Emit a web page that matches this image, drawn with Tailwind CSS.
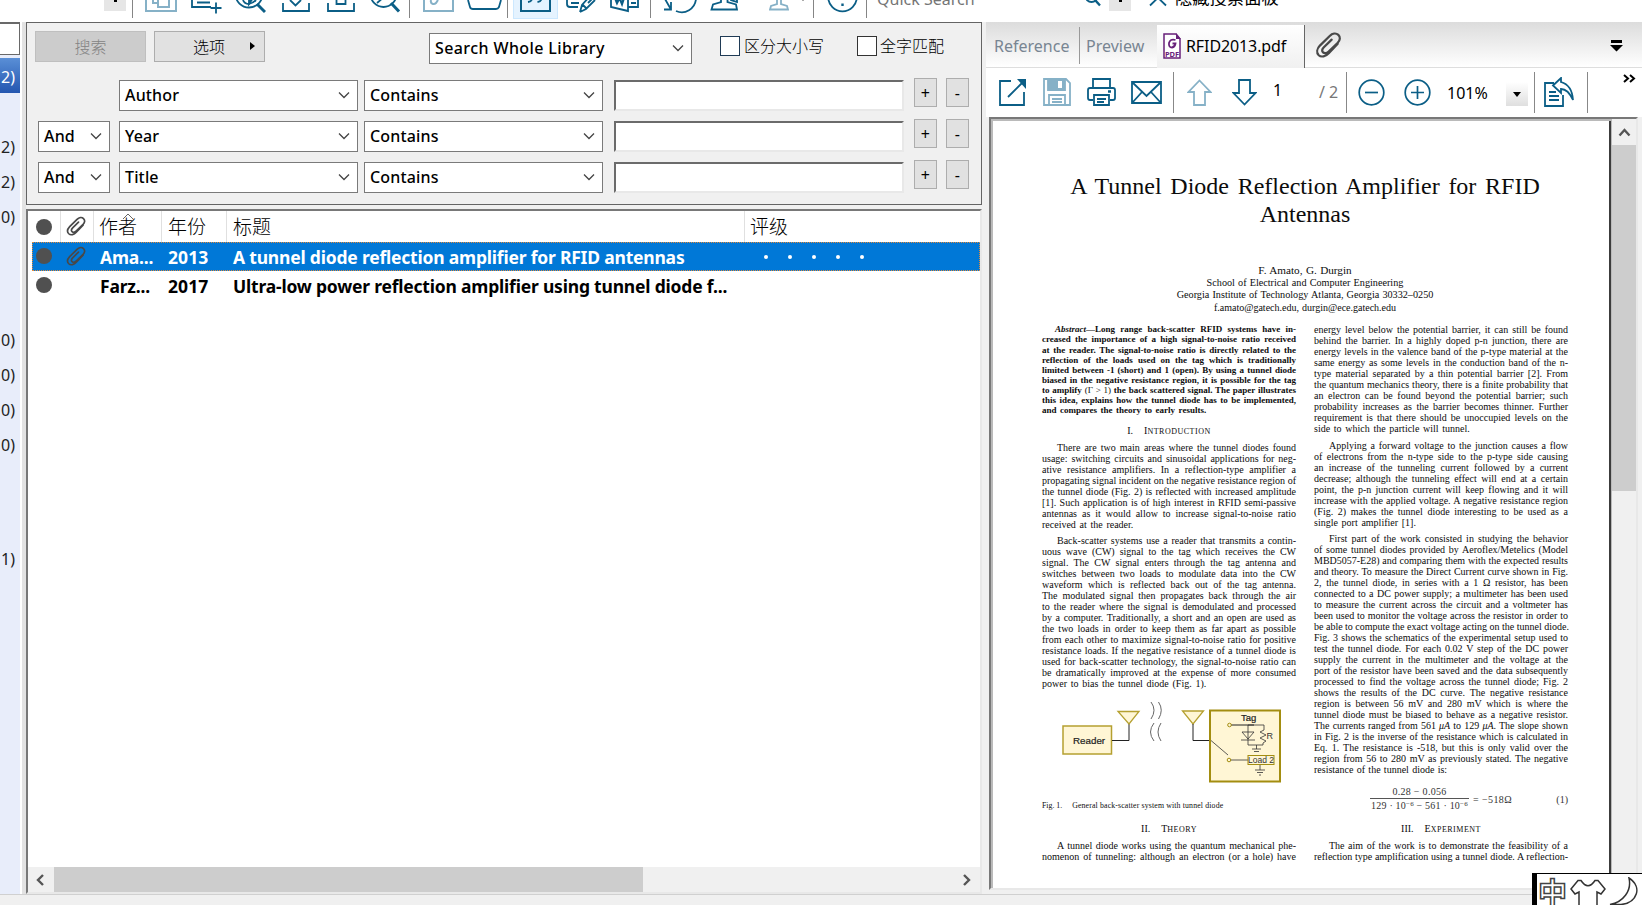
<!DOCTYPE html>
<html lang="zh-CN">
<head>
  <meta charset="UTF-8" />
  <meta name="viewport" content="width=device-width, initial-scale=1.0" />
  <title>Library</title>
  <script src="https://cdn.jsdelivr.net/npm/@tailwindcss/browser@4"></script>
</head>
<body class="w-[1642px] h-[905px] overflow-hidden bg-[#f0f0f0] text-black font-['Noto_Sans','Noto_Sans_CJK_SC',sans-serif]">

  <!-- Shared icons -->
  <svg class="hidden">
    <symbol id="chev" viewBox="0 0 12 8"><path d="M1 1.5L6 6.5L11 1.5" fill="none" stroke="#444" stroke-width="1.3" /></symbol>
    <symbol id="clip" viewBox="0 0 24 24"><path d="M19.5 10.5L11.8 18.6C9.2 21.4 5.4 22.4 3.2 20.3C1 18.1 1.7 14.8 4.2 12.1L12.6 3.8C14.8 1.6 18 1 20 2.9C22 4.8 21.6 7.4 19.5 9.6L11.5 17.3C10 18.8 8 19 6.9 17.9C5.8 16.8 6.2 15 7.6 13.5L14.3 7" fill="none" stroke="#484848" stroke-width="1.9" stroke-linecap="round" /></symbol>
  </svg>

  <div class="relative flex flex-col w-[1642px] h-[905px] overflow-hidden">

    <!-- Top toolbar -->
    <header class="flex items-start h-[22px] shrink-0 bg-white overflow-hidden">
      <div class="ml-[104px] w-[22px] h-[11px] bg-[#e6e6e6] flex justify-center"><span class="w-[3px] h-[2px] bg-black"></span></div>
      <div class="ml-[6px] w-px h-[18px] bg-[#858585]"></div>
      <svg class="ml-[12px]" width="32" height="14" fill="none" stroke="#86b1c7" stroke-width="2"><path d="M1 0V11H31V0" /><path d="M8 0V3H13M13 0V7H24V0" /></svg>
      <svg class="ml-[14px]" width="31" height="14" fill="none" stroke="#0b5e86" stroke-width="2"><path d="M1 0V7H20M6 2.5H19M19.5 8H30.5M25 2.5V13.5" stroke-width="1.8" /></svg>
      <svg class="ml-[13px]" width="31" height="14" fill="none" stroke="#0b5e86" stroke-width="1.8"><circle cx="14" cy="-6" r="13.5" /><path d="M8 0C9 3 12 4 14 4C18 3 20 1 21 0" /><path d="M14 -2L18 -2L14 4Z" fill="#0b5e86" /><path d="M22 4L30 12" stroke-width="3" /></svg>
      <svg class="ml-[16px]" width="28" height="14" fill="none" stroke="#0b5e86" stroke-width="1.8"><path d="M1 3V11H27V3M8 0L13.5 5.5L19 0" /></svg>
      <svg class="ml-[17px]" width="28" height="14" fill="none" stroke="#0b5e86" stroke-width="1.8"><path d="M1 3V11H27V3M9.500 0V4H18.500V0" /></svg>
      <svg class="ml-[15px]" width="31" height="14" fill="none" stroke="#0b5e86" stroke-width="1.8"><circle cx="13.500" cy="-6" r="13" /><path d="M7 3L14 -3" /><path d="M21 3L29 11.500" stroke-width="3" /></svg>
      <div class="ml-[8px] w-px h-[18px] bg-[#858585]"></div>
      <svg class="ml-[13px]" width="31" height="14" fill="none" stroke="#86b1c7" stroke-width="2"><path d="M1 0V11H30V0" /><path d="M8 0C7 4 11 5 13 3L15 0" /></svg>
      <svg class="ml-[13px]" width="36" height="14" fill="none" stroke="#0b5e86" stroke-width="1.8"><path d="M1 0L3 7Q3.500 9 6 9H29Q31 9 32 7L34 0" /></svg>
      <div class="ml-[4px] w-px h-[18px] bg-[#858585]"></div>
      <div class="ml-[5px] w-[45px] h-[19px] bg-[#e5f3ff] border border-t-0 border-[#cce8ff] flex justify-center">
        <svg width="31" height="14" fill="none" stroke="#0b5e86" stroke-width="2"><path d="M1 0V11H30V0" /><path d="M12 -1Q11.500 1.500 8 2M21.500 -1Q21 1.500 17.500 2" stroke-width="1.800" /></svg>
      </div>
      <svg class="ml-[8px]" width="31" height="14" fill="none" stroke="#0b5e86" stroke-width="1.800"><path d="M1 0V4Q1 7 4 7H12M5 3H13" /><path d="M14 12L16 5L24 -4M14 12L20 9L29 0M17 5L20 8M22 3L26 -1" /></svg>
      <svg class="ml-[13px]" width="31" height="14" fill="none" stroke="#0b5e86" stroke-width="1.800"><path d="M1 0V7L18 11V0" /><path d="M5 -2L7 3L9.500 -2L12 4L14 -2" stroke-width="2.200" /><path d="M18 7H28V0M21 3H26" /></svg>
      <div class="ml-[9px] w-px h-[18px] bg-[#858585]"></div>
      <svg class="ml-[12px]" width="34" height="14" fill="none" stroke="#0b5e86" stroke-width="1.800"><path d="M1 9.500H8V2M8 9.500L2 -1M13 11C22 15 32 9 33 -1" /></svg>
      <svg class="ml-[13px]" width="29" height="14" fill="none" stroke="#0b5e86" stroke-width="1.800"><path d="M11 -1V2L3 4.500L1.500 9.500H27L26 4.500L17.500 2V-1M21 -1V0L27 2V-1" /></svg>
      <svg class="ml-[30px]" width="20" height="14" fill="none" stroke="#86b1c7" stroke-width="1.800"><path d="M8 -1V4L2 6L1 9.500H19L18 6L12 4V-1" /></svg>
      <span class="ml-[13px] w-[2px] h-px bg-[#aaa]"></span>
      <div class="ml-[9px] w-px h-[18px] bg-[#858585]"></div>
      <svg class="ml-[13px]" width="31" height="14" fill="none" stroke="#0b5e86" stroke-width="1.800"><circle cx="15.500" cy="-3" r="14.300" /><path d="M15.500 3.500V6" stroke-width="2.400" /></svg>
      <div class="ml-[8px] w-px h-[18px] bg-[#858585]"></div>
      <span class="ml-[10px] -mt-[12px] w-[198px] h-[22px] leading-[22px] text-[16px] text-[#757575] whitespace-nowrap">Quick Search</span>
      <svg class="ml-[10px]" width="18" height="14" fill="none" stroke="#0b5e86" stroke-width="1.800"><circle cx="6.500" cy="-4" r="6" /><path d="M10 0L15 5.500" stroke-width="2.400" /></svg>
      <div class="ml-[6px] w-[22px] h-[11px] bg-[#e6e6e6] flex justify-center"><span class="w-[3px] h-[2px] bg-black"></span></div>
      <svg class="ml-[18px]" width="19" height="14" fill="none" stroke="#0b5e86" stroke-width="1.800"><path d="M1 5.500L16 -9M2 -9L17 5.500" /></svg>
      <span class="ml-[7px] -mt-[14px] h-[24px] leading-[24px] text-[17.300px] whitespace-nowrap">隐藏搜索面板</span>
    </header>

    <main class="flex h-[872px] shrink-0">

      <!-- Groups column -->
      <aside class="w-[20px] shrink-0 bg-[#e8edfa] text-[16px] text-[#222] text-right overflow-hidden">
        <div class="h-[33px] border border-l-0 border-t-2 border-[#696969] bg-white"></div>
        <div class="mt-[3px] h-[35px] leading-[38px] pr-[5px] bg-linear-to-b from-[#5a8fd6] to-[#2456b0] text-white">2)</div>
        <div class="mt-[37px] h-[35px] leading-[35px] pr-[5px]">2)</div>
        <div class="h-[35px] leading-[35px] pr-[5px]">2)</div>
        <div class="h-[35px] leading-[35px] pr-[5px]">0)</div>
        <div class="mt-[88px] h-[35px] leading-[35px] pr-[5px]">0)</div>
        <div class="h-[35px] leading-[35px] pr-[5px]">0)</div>
        <div class="h-[35px] leading-[35px] pr-[5px]">0)</div>
        <div class="h-[35px] leading-[35px] pr-[5px]">0)</div>
        <div class="mt-[79px] h-[35px] leading-[35px] pr-[5px]">1)</div>
      </aside>
      <div class="w-[6px] shrink-0 bg-[#e3e3e3] border-l-2 border-white"></div>

      <!-- Search panel and list -->
      <section class="w-[956px] shrink-0 flex flex-col">
        <div class="h-[183px] border border-[#646464] bg-[#f0f0f0] pl-[8px] text-[16px]">
          <div class="flex items-start h-[57px] pt-[8px]">
            <div class="w-[111px] h-[31px] bg-[#cccccc] border border-[#bfbfbf] text-[#838383] text-center leading-[30px] font-light">搜索</div>
            <div class="ml-[8px] w-[111px] h-[31px] bg-[#e1e1e1] border border-[#adadad] flex items-center pl-[38px] leading-[30px] font-light">选项
              <svg class="ml-[25px] -mt-[2px]" width="6" height="10"><path d="M0 1L5 5L0 9Z" fill="#000" /></svg>
            </div>
            <div class="ml-[164px] mt-[2px] w-[263px] h-[31px] bg-white border border-[#7a7a7a] flex items-center justify-between pb-[2px] pl-[5px] pr-[7px] font-medium tracking-[0.400px]">Search Whole Library<svg width="12" height="8"><use href="#chev" /></svg></div>
            <div class="ml-[28px] mt-[5px] w-[20px] h-[20px] bg-white border border-[#1f3a55]"></div>
            <span class="ml-[4px] mt-[2px] w-[113px] leading-[26px] whitespace-nowrap font-light">区分大小写</span>
            <div class="mt-[5px] w-[20px] h-[20px] bg-white border border-[#333]"></div>
            <span class="ml-[3px] mt-[2px] leading-[26px] whitespace-nowrap font-light">全字匹配</span>
          </div>

          <div class="flex items-start h-[41px] font-medium tracking-[0.150px]">
            <div class="ml-[84px] w-[239px] h-[31px] bg-white border border-[#7a7a7a] flex items-center justify-between pb-[2px] pl-[5px] pr-[7px]">Author<svg width="12" height="8"><use href="#chev" /></svg></div>
            <div class="ml-[6px] w-[239px] h-[31px] bg-white border border-[#7a7a7a] flex items-center justify-between pb-[2px] pl-[5px] pr-[7px]">Contains<svg width="12" height="8"><use href="#chev" /></svg></div>
            <div class="ml-[11px] w-[290px] h-[31px] bg-white border-2 border-t-[#6b6b6b] border-l-[#6b6b6b] border-r-[#e8e8e8] border-b-[#e8e8e8]"></div>
            <div class="ml-[10px] -mt-[2px] w-[23px] h-[29px] bg-[#e1e1e1] border border-[#adadad] text-center leading-[29px] font-normal">+</div>
            <div class="ml-[9px] -mt-[2px] w-[23px] h-[29px] bg-[#e1e1e1] border border-[#adadad] text-center leading-[29px] font-normal">-</div>
          </div>

          <div class="flex items-start h-[41px] font-medium tracking-[0.150px]">
            <div class="ml-[3px] w-[72px] h-[31px] bg-white border border-[#7a7a7a] flex items-center justify-between pb-[2px] pl-[5px] pr-[7px]">And<svg width="12" height="8"><use href="#chev" /></svg></div>
            <div class="ml-[9px] w-[239px] h-[31px] bg-white border border-[#7a7a7a] flex items-center justify-between pb-[2px] pl-[5px] pr-[7px]">Year<svg width="12" height="8"><use href="#chev" /></svg></div>
            <div class="ml-[6px] w-[239px] h-[31px] bg-white border border-[#7a7a7a] flex items-center justify-between pb-[2px] pl-[5px] pr-[7px]">Contains<svg width="12" height="8"><use href="#chev" /></svg></div>
            <div class="ml-[11px] w-[290px] h-[31px] bg-white border-2 border-t-[#6b6b6b] border-l-[#6b6b6b] border-r-[#e8e8e8] border-b-[#e8e8e8]"></div>
            <div class="ml-[10px] -mt-[2px] w-[23px] h-[29px] bg-[#e1e1e1] border border-[#adadad] text-center leading-[29px] font-normal">+</div>
            <div class="ml-[9px] -mt-[2px] w-[23px] h-[29px] bg-[#e1e1e1] border border-[#adadad] text-center leading-[29px] font-normal">-</div>
          </div>

          <div class="flex items-start h-[41px] font-medium tracking-[0.150px]">
            <div class="ml-[3px] w-[72px] h-[31px] bg-white border border-[#7a7a7a] flex items-center justify-between pb-[2px] pl-[5px] pr-[7px]">And<svg width="12" height="8"><use href="#chev" /></svg></div>
            <div class="ml-[9px] w-[239px] h-[31px] bg-white border border-[#7a7a7a] flex items-center justify-between pb-[2px] pl-[5px] pr-[7px]">Title<svg width="12" height="8"><use href="#chev" /></svg></div>
            <div class="ml-[6px] w-[239px] h-[31px] bg-white border border-[#7a7a7a] flex items-center justify-between pb-[2px] pl-[5px] pr-[7px]">Contains<svg width="12" height="8"><use href="#chev" /></svg></div>
            <div class="ml-[11px] w-[290px] h-[31px] bg-white border-2 border-t-[#6b6b6b] border-l-[#6b6b6b] border-r-[#e8e8e8] border-b-[#e8e8e8]"></div>
            <div class="ml-[10px] -mt-[2px] w-[23px] h-[29px] bg-[#e1e1e1] border border-[#adadad] text-center leading-[29px] font-normal">+</div>
            <div class="ml-[9px] -mt-[2px] w-[23px] h-[29px] bg-[#e1e1e1] border border-[#adadad] text-center leading-[29px] font-normal">-</div>
          </div>
        </div>

        <!-- Reference list -->
        <div class="mt-[4px] w-[956px] h-[685px] border-2 border-t-[#787878] border-l-[#787878] border-r-[#e8e8e8] border-b-[#e8e8e8] bg-white flex flex-col">
          <div class="relative flex h-[31px] shrink-0 text-[19px] leading-[32px] font-light">
            <div class="w-[33px] border-r border-[#e0e0e0] flex items-center pl-[8px]"><span class="w-[16px] h-[16px] rounded-full bg-[#505050]"></span></div>
            <div class="w-[33px] border-r border-[#e0e0e0] flex items-center pl-[5px]"><svg width="21" height="21"><use href="#clip" /></svg></div>
            <div class="w-[68px] border-r border-[#e0e0e0] pl-[5px]">作者</div>
            <div class="w-[65px] border-r border-[#e0e0e0] pl-[6px]">年份</div>
            <div class="w-[518px] border-r border-[#e0e0e0] pl-[6px]">标题</div>
            <div class="pl-[5px]">评级</div>
            <svg class="absolute left-[94px] top-[2px]" width="12" height="7"><path d="M1 6L6 1L11 6" fill="none" stroke="#666" /></svg>
          </div>
          <div class="ml-[4px] flex h-[29px] shrink-0 bg-[#0078d7] text-white font-bold text-[17.500px] tracking-[-0.200px] leading-[28px] border border-dotted border-[#e08a3c]">
            <div class="w-[28px] pl-[3px] pt-[5px]"><span class="block w-[16px] h-[16px] rounded-full bg-[#505050]"></span></div>
            <div class="w-[33px] pl-[5px] pt-[3px]"><svg width="21" height="21"><use href="#clip" /></svg></div>
            <div class="w-[68px] pl-[6px]">Ama...</div>
            <div class="w-[65px] pl-[6px] tracking-[0.100px]">2013</div>
            <div class="w-[518px] pl-[6px] whitespace-nowrap">A tunnel diode reflection amplifier for RFID antennas</div>
            <div class="flex gap-[20px] pl-[19px] pt-[12px]">
              <span class="w-[4px] h-[4px] rounded-full bg-white"></span>
              <span class="w-[4px] h-[4px] rounded-full bg-white"></span>
              <span class="w-[4px] h-[4px] rounded-full bg-white"></span>
              <span class="w-[4px] h-[4px] rounded-full bg-white"></span>
              <span class="w-[4px] h-[4px] rounded-full bg-white"></span>
            </div>
          </div>
          <div class="ml-[5px] flex h-[29px] shrink-0 font-bold text-[17.500px] tracking-[-0.200px] leading-[31px]">
            <div class="w-[28px] pl-[3px] pt-[6px]"><span class="block w-[16px] h-[16px] rounded-full bg-[#505050]"></span></div>
            <div class="w-[33px]"></div>
            <div class="w-[68px] pl-[6px]">Farz...</div>
            <div class="w-[65px] pl-[6px] tracking-[0.100px]">2017</div>
            <div class="w-[518px] pl-[6px] whitespace-nowrap">Ultra-low power reflection amplifier using tunnel diode f...</div>
          </div>
          <div class="flex-1"></div>
          <div class="flex items-center h-[25px] bg-[#f0f0f0]">
            <svg class="ml-[8px]" width="9" height="12"><path d="M7 1L2 6L7 11" fill="none" stroke="#555" stroke-width="2.400" /></svg>
            <div class="ml-[9px] w-[589px] h-full bg-[#cdcdcd]"></div>
            <svg class="ml-auto mr-[9px]" width="9" height="12"><path d="M2 1L7 6L2 11" fill="none" stroke="#555" stroke-width="2.400" /></svg>
          </div>
        </div>
      </section>

      <!-- PDF panel -->
      <section class="ml-[4px] w-[656px] shrink-0 flex flex-col">
        <nav class="flex h-[46px] shrink-0 bg-linear-to-b from-[#dcdcdc] to-white text-[16px] border-b border-[#dedede]">
          <span class="w-[93px] pl-[8px] leading-[49px] text-[#788592]">Reference</span>
          <div class="mt-[5px] w-px h-[37px] bg-[#999]"></div>
          <span class="w-[77px] pl-[6px] leading-[49px] text-[#788592]">Preview</span>
          <div class="mt-[3px] w-[148px] h-[43px] bg-linear-to-b from-white to-[#f0f0f0] border-r border-[#666] flex items-center pl-[6px]">
            <svg width="18" height="26" class="-mt-[2px]"><path d="M1 1H13L17 6V25H1Z" fill="#fff" stroke="#68217a" stroke-width="1.500" /><path d="M13 0V6H18Z" fill="#68217a" /><path d="M12.500 7Q7 5.500 6 10Q5.500 14.500 9 14.500Q12 14 12.500 10.500H9.500" fill="none" stroke="#68217a" stroke-width="1.800" /><text x="2" y="23.500" font-size="7.500" font-weight="bold" fill="#68217a" textLength="14">PDF</text></svg>
            <span class="ml-[5px] -mt-[2px] tracking-[-0.100px]">RFID2013.pdf</span>
          </div>
          <svg class="ml-[10px] mt-[9px]" width="28" height="29"><use href="#clip" /></svg>
          <svg class="ml-auto mr-[19px] mt-[18px]" width="13" height="12"><path d="M1 0H12V3H1ZM0 5H13L6.500 11.500Z" fill="#000" /></svg>
        </nav>

        <div class="flex items-start h-[49px] shrink-0 bg-white text-[16px]">
          <svg class="ml-[12px] mt-[10px]" width="30" height="30" fill="none" stroke="#0b5e86" stroke-width="1.800"><path d="M13 3H2V27H26V14M10 19L24 5" /><path d="M19 1H28V11Z" fill="#0b5e86" stroke="none" /></svg>
          <svg class="ml-[15px] mt-[10px]" width="28" height="30" fill="none" stroke="#86b1c7" stroke-width="1.800"><path d="M1 1H23L27 5V27H1Z" /><path d="M5 1H22V12H5Z" fill="#86b1c7" /><path d="M15 3H19V10H15Z" fill="#fff" stroke="none" /><path d="M6 27V17H22V27M9 21H19M9 24H19" /></svg>
          <svg class="ml-[16px] mt-[10px]" width="29" height="30" fill="none" stroke="#0b5e86" stroke-width="1.800"><path d="M6 10V1H23V10M6 22H3Q1 22 1 20V12Q1 10 3 10H26Q28 10 28 12V20Q28 22 26 22H23M7 17H22V27H7ZM10 21H19M10 24H17" /><path d="M21 13.500H24" stroke-width="2.500" /></svg>
          <svg class="ml-[15px] mt-[13px]" width="31" height="24" fill="none" stroke="#0b5e86" stroke-width="1.800"><path d="M1 1H30V22H1ZM1 1L15.500 15L30 1M1 22L11 11M30 22L20 11" /></svg>
          <div class="ml-[11px] mt-[4px] w-px h-[41px] bg-[#888]"></div>
          <svg class="ml-[13px] mt-[11px]" width="25" height="28" fill="none" stroke="#86b1c7" stroke-width="1.800"><path d="M12.500 1.500L23.500 13H18V26H7V13H1.500Z" /></svg>
          <svg class="ml-[20px] mt-[11px]" width="25" height="28" fill="none" stroke="#0b5e86" stroke-width="1.800"><path d="M12.500 25.500L1.500 14H7V1H18V14H23.500Z" /></svg>
          <span class="ml-[16px] mt-[10px] w-[46px] leading-[24px]">1</span>
          <span class="mt-[12px] w-[27px] leading-[24px] text-[#777] whitespace-nowrap">/ 2</span>
          <div class="mt-[4px] w-px h-[41px] bg-[#888]"></div>
          <svg class="ml-[11px] mt-[11px]" width="27" height="27" fill="none" stroke="#0b5e86" stroke-width="1.700"><circle cx="13.500" cy="13.500" r="12.300" /><path d="M7 13.500H20" /></svg>
          <svg class="ml-[19px] mt-[11px]" width="27" height="27" fill="none" stroke="#0b5e86" stroke-width="1.700"><circle cx="13.500" cy="13.500" r="12.300" /><path d="M7 13.500H20M13.500 7V20" /></svg>
          <span class="ml-[16px] mt-[13px] w-[59px] leading-[24px]">101%</span>
          <div class="mt-[14px] w-[22px] h-[24px] bg-linear-to-b from-white to-[#dfdfdf] flex items-center justify-center"><svg width="8" height="5"><path d="M0 0H8L4 5Z" /></svg></div>
          <div class="ml-[6px] mt-[4px] w-px h-[41px] bg-[#888]"></div>
          <svg class="ml-[8px] mt-[9px]" width="32" height="31" fill="none" stroke="#0b5e86" stroke-width="1.800"><path d="M11 6H2V29H20V18M6 15H13M6 19H16M6 23H16" /><path d="M10 8.500L18 1V5Q29 8 30 23Q25 12 18 12V16Z" /></svg>
          <div class="ml-[12px] mt-[4px] w-px h-[41px] bg-[#888]"></div>
          <svg class="ml-[35px] mt-[6px]" width="13" height="9" fill="none" stroke="#000" stroke-width="2"><path d="M1 1L5 4.500L1 8M7 1L11 4.500L7 8" /></svg>
        </div>

        <div class="flex h-[773px] ml-[3px] mr-[4px] border-2 border-t-[#787878] border-l-[#787878] border-r-[#e8e8e8] border-b-[#e8e8e8] bg-[#bababa]">
          <!-- Page -->
          <article class="ml-[2px] mt-[2px] w-[618px] shrink-0 bg-white border-r-2 border-[#3c3c3c] overflow-hidden font-['Liberation_Serif',serif] text-[#0c0c0c]">
            <h1 class="mt-[51px] mr-[-8px] text-center text-[24px] leading-[28px] [word-spacing:2.700px]">A Tunnel Diode Reflection Amplifier for RFID<br />Antennas</h1>
            <div class="mt-[36px] mr-[-8px] text-center text-[10.200px] leading-[12.600px] [word-spacing:0.600px]">
              <div class="text-[11.200px]">F. Amato, G. Durgin</div>
              <div>School of Electrical and Computer Engineering</div>
              <div>Georgia Institute of Technology Atlanta, Georgia 30332–0250</div>
              <div class="text-[10px]">f.amato@gatech.edu, durgin@ece.gatech.edu</div>
            </div>

            <div class="mt-[10px] flex gap-[18px] pl-[49px] text-[10px] leading-[11px]">
              <div class="w-[254px] shrink-0">
                <p class="whitespace-nowrap indent-[13px] font-bold text-[9px] leading-[10.080px] [text-align-last:justify]">
                  <i>Abstract</i>—Long range back-scatter RFID systems have in-<br />
                  creased the importance of a high signal-to-noise ratio received<br />
                  at the reader. The signal-to-noise ratio is directly related to the<br />
                  reflection of the loads used on the tag which is traditionally<br />
                  limited between -1 (short) and 1 (open). By using a tunnel diode<br />
                  biased in the negative resistance region, it is possible for the tag<br />
                  to amplify <span class="font-normal">(Γ &gt; 1)</span> the back scattered signal. The paper illustrates<br />
                  this idea, explains how the tunnel diode has to be implemented,
                  <span class="block indent-0 [text-align-last:left] [word-spacing:1.300px]">and compares the theory to early results.</span>
                </p>
                <h2 class="mt-[10px] text-center">I.<span class="ml-[11px]">I<span class="text-[8px] tracking-[0.500px]">NTRODUCTION</span></span></h2>
                <p class="mt-[5px] whitespace-nowrap indent-[15px] [text-align-last:justify]">
                  There are two main areas where the tunnel diodes found<br />
                  usage: switching circuits and sinusoidal applications for neg-<br />
                  ative resistance amplifiers. In a reflection-type amplifier a<br />
                  propagating signal incident on the negative resistance region of<br />
                  the tunnel diode (Fig. 2) is reflected with increased amplitude<br />
                  [1]. Such application is of high interest in RFID semi-passive<br />
                  antennas as it would allow to increase signal-to-noise ratio
                  <span class="block indent-0 [text-align-last:left] [word-spacing:1.200px]">received at the reader.</span>
                </p>
                <p class="mt-[5px] whitespace-nowrap indent-[15px] [text-align-last:justify]">
                  Back-scatter systems use a reader that transmits a contin-<br />
                  uous wave (CW) signal to the tag which receives the CW<br />
                  signal. The CW signal enters through the tag antenna and<br />
                  switches between two loads to modulate data into the CW<br />
                  waveform which is reflected back out of the tag antenna.<br />
                  The modulated signal then propagates back through the air<br />
                  to the reader where the signal is demodulated and processed<br />
                  by a computer. Traditionally, a short and an open are used as<br />
                  the two loads in order to keep them as far apart as possible<br />
                  from each other to maximize signal-to-noise ratio for positive<br />
                  resistance loads. If the negative resistance of a tunnel diode is<br />
                  used for back-scatter technology, the signal-to-noise ratio can<br />
                  be dramatically improved at the expense of more consumed
                  <span class="block indent-0 [text-align-last:left] [word-spacing:1.200px]">power to bias the tunnel diode (Fig. 1).</span>
                </p>

                <!-- Fig. 1 -->
                <svg class="mt-[11px]" width="254" height="86" font-family="Liberation Sans, sans-serif" fill="none" stroke="#333">
                  <rect x="21" y="26" width="48.500" height="28" fill="#fff6d5" stroke="#b5a030" stroke-width="1.500" />
                  <text x="31" y="43.500" font-size="9.800" fill="#222" stroke="#222" stroke-width="0.200">Reader</text>
                  <path d="M70 40.500H87V24" stroke="#222" />
                  <path d="M76 11.500H97L87 24Z" fill="#fff6d5" stroke="#b5a030" stroke-width="1.300" />
                  <path d="M109 2Q115 10 109 19M116.500 2Q122 10 116.500 19M112 23Q105 32 112 41M119 23Q113 32 119 41" stroke="#666" />
                  <path d="M140.500 11H161.500L151 24Z" fill="#fff6d5" stroke="#b5a030" stroke-width="1.300" />
                  <path d="M151 24V40.500H169" stroke="#222" />
                  <rect x="168" y="10.500" width="70" height="71" fill="#fff6d5" stroke="#a38d10" stroke-width="2" />
                  <text x="199" y="21" font-size="9.500" fill="#222" stroke="#222" stroke-width="0.200">Tag</text>
                  <path d="M169 40.500L186 55M206 25H222V30L218 32L224 35L218 38L224 41L221 43V45H206V25M200 32H212L206 39ZM199 40H213M214.500 45V49M210 49H219M212 51.500H217M188 60H206M218 65V70M213 70H223M215 72.500H221M217 75H219" stroke-width="0.800" />
                  <path d="M189 25H212" stroke="#222" />
                  <circle cx="187.500" cy="25" r="1.800" stroke="#a38d10" />
                  <circle cx="187" cy="60" r="1.800" stroke="#a38d10" />
                  <text x="224.500" y="38.500" font-size="9" fill="#333" stroke="none">R</text>
                  <rect x="206" y="55.500" width="26" height="9" stroke="#a38d10" />
                  <text x="206" y="63" font-size="8.500" fill="#333" stroke="none" textLength="26">Load 2</text>
                </svg>
                <div class="mt-[15px] text-[7.800px] leading-[10px] whitespace-nowrap">Fig. 1.<span class="ml-[10px] tracking-[0.150px]">General back-scatter system with tunnel diode</span></div>
                <h2 class="mt-[12px] text-center">II.<span class="ml-[11px]">T<span class="text-[8px] tracking-[0.500px]">HEORY</span></span></h2>
                <p class="mt-[5px] whitespace-nowrap indent-[15px] [text-align-last:justify]">
                  A tunnel diode works using the quantum mechanical phe-<br />
                  nomenon of tunneling: although an electron (or a hole) have
                </p>
              </div>

              <div class="w-[254px] shrink-0">
                <p class="whitespace-nowrap [text-align-last:justify]">
                  energy level below the potential barrier, it can still be found<br />
                  behind the barrier. In a highly doped p-n junction, there are<br />
                  energy levels in the valence band of the p-type material at the<br />
                  same energy as some levels in the conduction band of the n-<br />
                  type material separated by a thin potential barrier [2]. From<br />
                  the quantum mechanics theory, there is a finite probability that<br />
                  an electron can be found beyond the potential barrier; such<br />
                  probability increases as the barrier becomes thinner. Further<br />
                  requirement is that there should be unoccupied levels on the
                  <span class="block [text-align-last:left] [word-spacing:1.200px]">side to which the particle will tunnel.</span>
                </p>
                <p class="mt-[5.500px] whitespace-nowrap indent-[15px] [text-align-last:justify]">
                  Applying a forward voltage to the junction causes a flow<br />
                  of electrons from the n-type side to the p-type side causing<br />
                  an increase of the tunneling current followed by a current<br />
                  decrease; although the tunneling effect will end at a certain<br />
                  point, the p-n junction current will keep flowing and it will<br />
                  increase with the applied voltage. A negative resistance region<br />
                  (Fig. 2) makes the tunnel diode interesting to be used as a
                  <span class="block indent-0 [text-align-last:left] [word-spacing:1.200px]">single port amplifier [1].</span>
                </p>
                <p class="mt-[5.500px] whitespace-nowrap indent-[15px] [text-align-last:justify]">
                  First part of the work consisted in studying the behavior<br />
                  of some tunnel diodes provided by Aeroflex/Metelics (Model<br />
                  MBD5057-E28) and comparing them with the expected results<br />
                  and theory. To measure the Direct Current curve shown in Fig.<br />
                  2, the tunnel diode, in series with a 1 Ω resistor, has been<br />
                  connected to a DC power supply; a multimeter has been used<br />
                  to measure the current across the circuit and a voltmeter has<br />
                  been used to monitor the voltage across the resistor in order to<br />
                  be able to compute the exact voltage acting on the tunnel diode.<br />
                  Fig. 3 shows the schematics of the experimental setup used to<br />
                  test the tunnel diode. For each 0.02 V step of the DC power<br />
                  supply the current in the multimeter and the voltage at the<br />
                  port of the resistor have been saved and the data subsequently<br />
                  processed to find the voltage across the tunnel diode; Fig. 2<br />
                  shows the results of the DC curve. The negative resistance<br />
                  region is between 56 mV and 280 mV which is where the<br />
                  tunnel diode must be biased to behave as a negative resistor.<br />
                  The currents ranged from 561 <i>μA</i> to 129 <i>μA</i>. The slope shown<br />
                  in Fig. 2 is the inverse of the resistance which is calculated in<br />
                  Eq. 1. The resistance is -518, but this is only valid over the<br />
                  region from 56 to 280 mV as previously stated. The negative
                  <span class="block indent-0 [text-align-last:left] [word-spacing:0.800px]">resistance of the tunnel diode is:</span>
                </p>
                <div class="mt-[11.500px] h-[26px] flex items-center pl-[56px] text-[#333] whitespace-nowrap">
                  <div class="w-[99px] text-center">
                    <div class="h-[12px] border-b border-[#555] leading-[10px] tracking-[0.300px]">0.28 − 0.056</div>
                    <div class="h-[13px] leading-[13px] tracking-[0.200px]">129 · 10<sup class="text-[7px]">−6</sup> − 561 · 10<sup class="text-[7px]">−6</sup></div>
                  </div>
                  <span class="ml-[4px] tracking-[0.400px]">= −518Ω</span>
                  <span class="ml-auto">(1)</span>
                </div>
                <h2 class="mt-[10.500px] text-center">III.<span class="ml-[11px]">E<span class="text-[8px] tracking-[0.500px]">XPERIMENT</span></span></h2>
                <p class="mt-[4.500px] whitespace-nowrap indent-[15px] [text-align-last:justify]">
                  The aim of the work is to demonstrate the feasibility of a<br />
                  reflection type amplification using a tunnel diode. A reflection-
                </p>
              </div>
            </div>
          </article>
          <div class="ml-[1px] flex-1 bg-[#f0f0f0] flex flex-col items-center">
            <div class="h-[26px] flex items-center"><svg width="13" height="9"><path d="M1.500 7.500L6.500 2L11.500 7.500" fill="none" stroke="#555" stroke-width="2.400" /></svg></div>
            <div class="w-full h-[346px] bg-[#cdcdcd]"></div>
          </div>
        </div>
      </section>
    </main>

    <!-- Status bar -->
    <footer class="h-[11px] shrink-0 bg-[#f0f0f0] border-t border-[#d0d0d0]"></footer>

    <!-- Input method bar -->
    <div class="absolute left-[1532px] top-[873px] w-[110px] h-[32px] bg-white border-t border-l-[5px] border-black overflow-hidden flex">
      <span class="ml-[1px] mt-[2px] w-[30px] text-[29px] leading-[34px] font-bold text-white [-webkit-text-stroke:1.500px_#444]">中</span>
      <svg class="ml-[1px] mt-[5px]" width="38" height="30" fill="none" stroke="#333" stroke-width="1.500"><path d="M10 30V13L6 15L2 10L9 1.500H12Q19 12 26 1.500H29L36 10L32 15L28 13V30" /></svg>
      <svg class="ml-[2px] mt-[3px]" width="32" height="30" fill="none" stroke="#333" stroke-width="1.500"><path d="M20 1C23 14 14 25 1 27.500H12C28 26 34 10 20 1Z" /></svg>
    </div>
  </div>
</body>
</html>
